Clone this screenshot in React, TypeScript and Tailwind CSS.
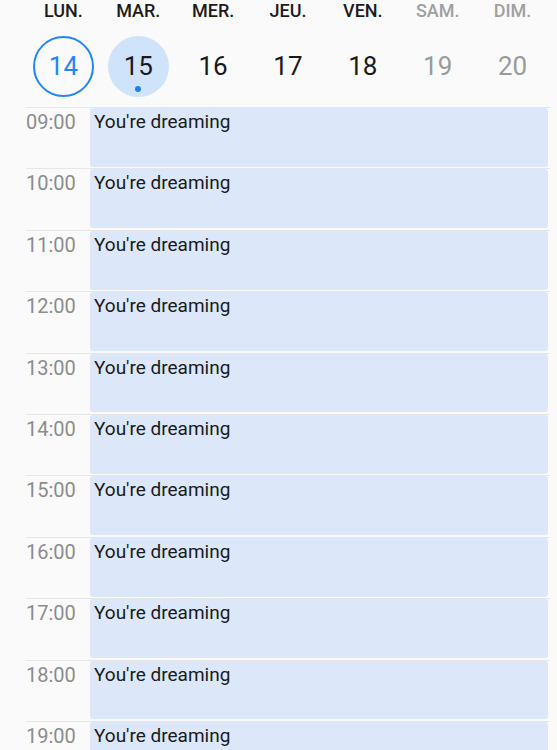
const days = [
  { label: 'LUN.', num: 14, weekend: false },
  { label: 'MAR.', num: 15, weekend: false },
  { label: 'MER.', num: 16, weekend: false },
  { label: 'JEU.', num: 17, weekend: false },
  { label: 'VEN.', num: 18, weekend: false },
  { label: 'SAM.', num: 19, weekend: true },
  { label: 'DIM.', num: 20, weekend: true },
];

const hours = ['09:00', '10:00', '11:00', '12:00', '13:00', '14:00', '15:00', '16:00', '17:00', '18:00', '19:00'];

function DayNumber({ num, weekend }: { num: number; weekend: boolean }) {
  if (num === 14) {
    return (
      <div className="flex h-[61px] w-[61px] items-center justify-center rounded-full border-2 border-[#1e88f5] text-[26px] text-[#1e88f5]">
        {num}
      </div>
    );
  }
  if (num === 15) {
    return (
      <div className="relative flex h-[61px] w-[61px] items-center justify-center rounded-full bg-[#cfe3fa] text-[26px] text-[#1a1a1a]">
        {num}
        <span className="absolute bottom-[5px] left-1/2 h-[6px] w-[6px] -translate-x-1/2 rounded-full bg-[#1e7ff2]" />
      </div>
    );
  }
  return (
    <div
      className={`flex h-[61px] w-[61px] items-center justify-center text-[26px] ${
        weekend ? 'text-[#9a9a9a]' : 'text-[#1a1a1a]'
      }`}
    >
      {num}
    </div>
  );
}

export default function App() {
  return (
    <div
      className="h-[750px] w-[557px] overflow-hidden bg-[#fafafa] pl-[26px] pr-[7px]"
      style={{ fontFamily: 'Roboto, "Noto Sans", sans-serif' }}
    >
      <div className="grid grid-cols-7 pb-[10px]">
        {days.map((d) => (
          <div key={d.label} className="flex flex-col items-center">
            <div
              className={`flex h-[20px] items-center text-[18px] font-medium ${
                d.weekend ? 'text-[#a0a0a0]' : 'text-[#1c1c1c]'
              }`}
            >
              {d.label}
            </div>
            <div className="mt-[16px]">
              <DayNumber num={d.num} weekend={d.weekend} />
            </div>
          </div>
        ))}
      </div>

      <div className="flex flex-col">
        {hours.map((h) => (
          <div key={h} className="flex h-[61.4px] shrink-0 border-t border-[#e6e6e6]">
            <div className="w-[64px] pt-[2px] text-[20px] leading-[24px] text-[#8c8c8c]">{h}</div>
            <div className="mb-[1.5px] mr-[2px] flex-1 rounded-[3px] bg-[#dce8fa] pl-[4px] pt-[2px] text-[19px] leading-[24px] text-[#1a1a1a]">
              You're dreaming
            </div>
          </div>
        ))}
      </div>
    </div>
  );
}
